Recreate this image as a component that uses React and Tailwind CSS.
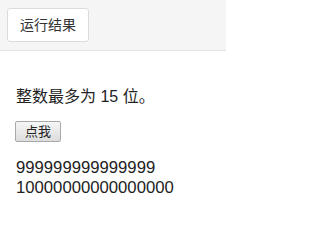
export default function App() {
  return (
    <div className="w-[226px] h-[241px] bg-white text-[#222] font-['Liberation_Sans','Noto_Sans_CJK_SC',sans-serif]">
      <div className="h-[51px] bg-[#f5f5f5] border-b border-[#e3e3e3] px-[7px] pt-[8px]">
        <button className="h-[34px] px-[12px] bg-white border border-[#dcdcdc] rounded-[3px] text-[14px] text-[#333]">
          运行结果
        </button>
      </div>
      <div className="px-[15px] pt-[36px]">
        <p className="pl-[1px] text-[16px] leading-[20px]">整数最多为 15 位。</p>
        <button className="mt-[14px] h-[21px] px-[9px] text-[13px] leading-none bg-gradient-to-b from-[#f6f6f6] to-[#dddddd] border border-[#a9a9a9] rounded-[2px]">
          点我
        </button>
        <div className="mt-[15px] pl-[1px] text-[16.7px] leading-[20px]">
          <div>999999999999999</div>
          <div>10000000000000000</div>
        </div>
      </div>
    </div>
  );
}
